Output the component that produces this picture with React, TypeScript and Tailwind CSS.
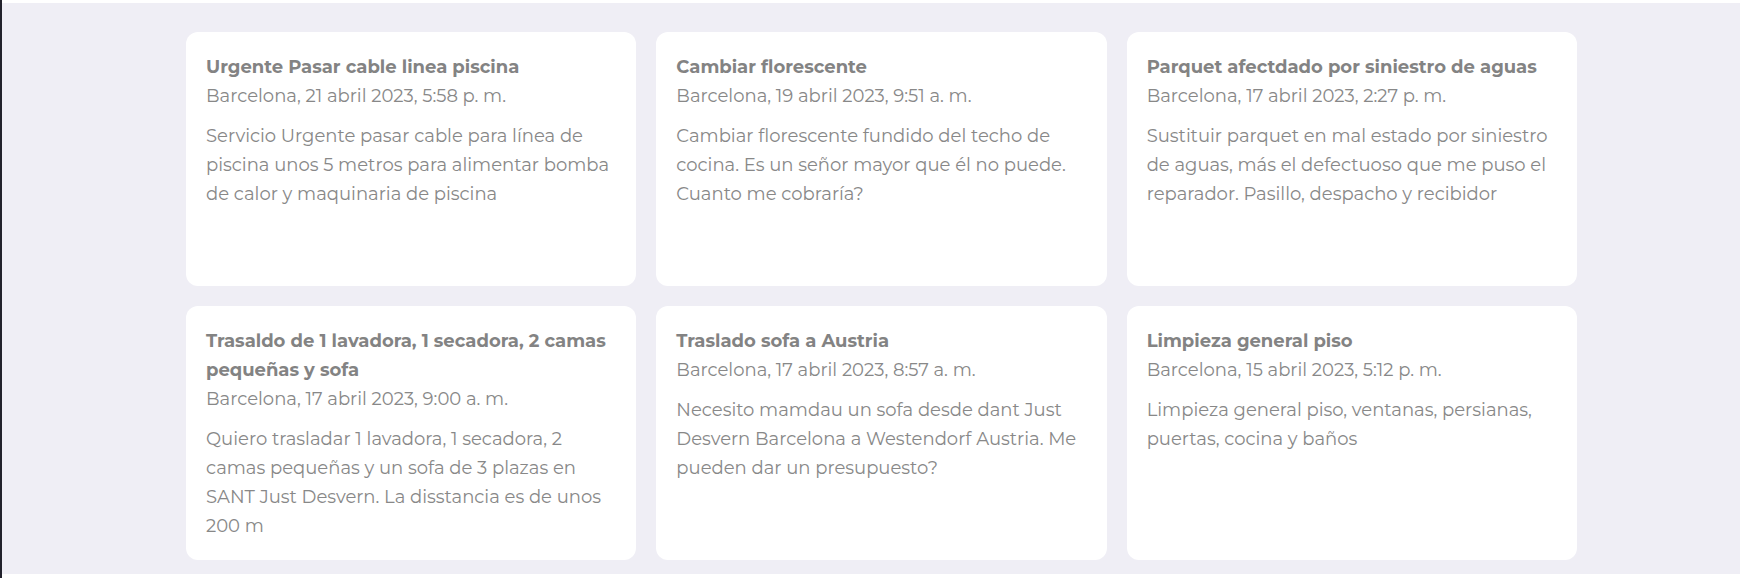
type Job = { title: string; date: string; description: string };

const jobs: Job[] = [
  {
    title: "Urgente Pasar cable linea piscina",
    date: "Barcelona, 21 abril 2023, 5:58 p. m.",
    description:
      "Servicio Urgente pasar cable para línea de piscina unos 5 metros para alimentar bomba de calor y maquinaria de piscina",
  },
  {
    title: "Cambiar florescente",
    date: "Barcelona, 19 abril 2023, 9:51 a. m.",
    description:
      "Cambiar florescente fundido del techo de cocina. Es un señor mayor que él no puede. Cuanto me cobraría?",
  },
  {
    title: "Parquet afectdado por siniestro de aguas",
    date: "Barcelona, 17 abril 2023, 2:27 p. m.",
    description:
      "Sustituir parquet en mal estado por siniestro de aguas, más el defectuoso que me puso el reparador. Pasillo, despacho y recibidor",
  },
  {
    title: "Trasaldo de 1 lavadora, 1 secadora, 2 camas pequeñas y sofa",
    date: "Barcelona, 17 abril 2023, 9:00 a. m.",
    description:
      "Quiero trasladar 1 lavadora, 1 secadora, 2 camas pequeñas y un sofa de 3 plazas en SANT Just Desvern. La disstancia es de unos 200 m",
  },
  {
    title: "Traslado sofa a Austria",
    date: "Barcelona, 17 abril 2023, 8:57 a. m.",
    description:
      "Necesito mamdau un sofa desde dant Just Desvern Barcelona a Westendorf Austria. Me pueden dar un presupuesto?",
  },
  {
    title: "Limpieza general piso",
    date: "Barcelona, 15 abril 2023, 5:12 p. m.",
    description: "Limpieza general piso, ventanas, persianas, puertas, cocina y baños",
  },
];

function JobCard({ title, date, description }: Job) {
  return (
    <article className="rounded-xl bg-white px-5 pt-[21px] pb-[19px]">
      <h2 className="font-bold text-[#838383]">{title}</h2>
      <p>{date}</p>
      <p className="mt-[11px]">{description}</p>
    </article>
  );
}

export default function App() {
  return (
    <main className="min-h-screen border-l-2 border-[#22222c] bg-white pt-[3px] font-['Montserrat','Inter',sans-serif] text-[18px] leading-[29px] text-[#888888]">
      <section className="bg-[#efeef5] pt-[29px] pr-[163px] pb-[14px] pl-[184px]">
        <div className="grid auto-rows-fr grid-cols-3 gap-5">
          {jobs.map((job) => (
            <JobCard key={job.title} {...job} />
          ))}
        </div>
      </section>
    </main>
  );
}
